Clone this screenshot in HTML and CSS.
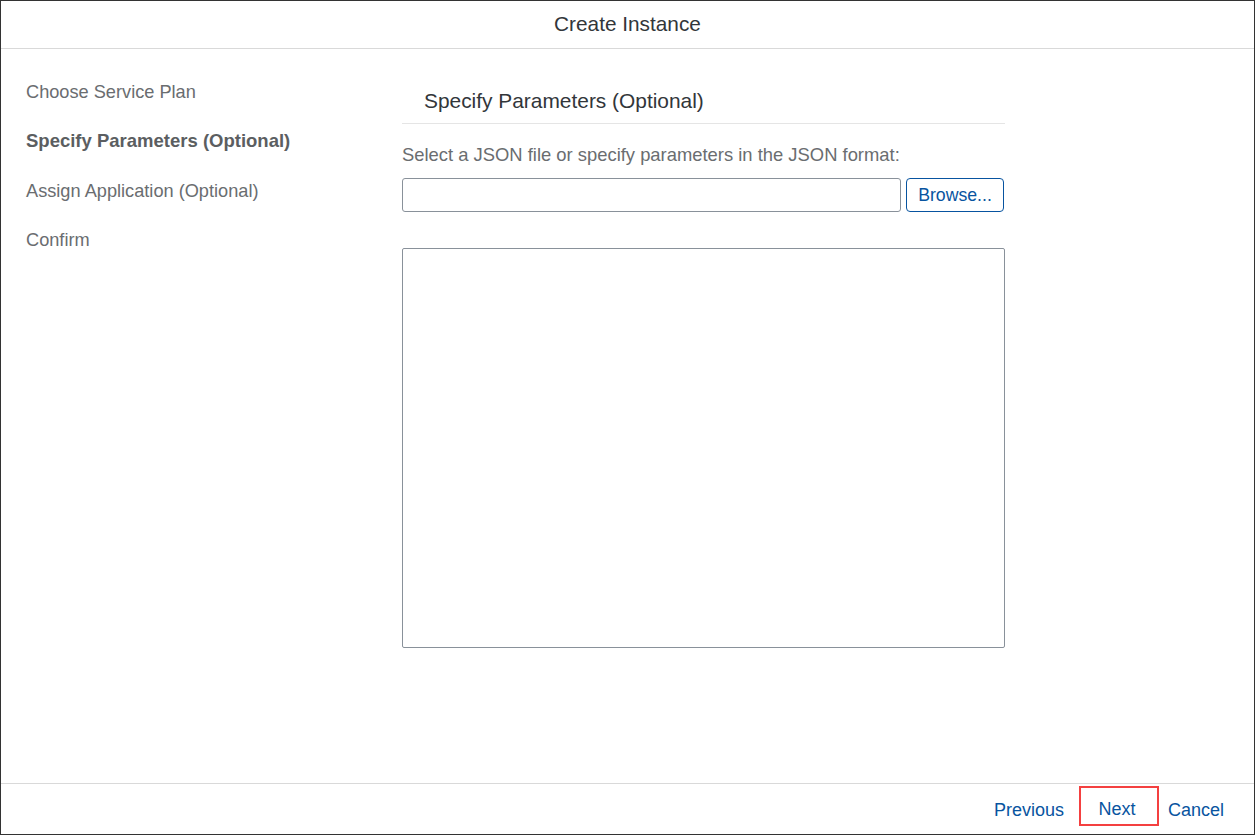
FILE: index.html
```html
<!DOCTYPE html>
<html>
<head>
<meta charset="utf-8">
<link rel="stylesheet" href="styles.css">
</head>
<body>
<div class="dialog">
  <header class="header">Create Instance</header>
  <div class="main">
    <nav class="steps">
      <div class="step">Choose Service Plan</div>
      <div class="step active">Specify Parameters (Optional)</div>
      <div class="step">Assign Application (Optional)</div>
      <div class="step">Confirm</div>
    </nav>
    <section class="content">
      <h2 class="title">Specify Parameters (Optional)</h2>
      <p class="label">Select a JSON file or specify parameters in the JSON format:</p>
      <div class="filerow">
        <div class="input"></div>
        <button class="browse">Browse...</button>
      </div>
      <div class="textarea"></div>
    </section>
  </div>
  <footer class="footer">
    <button class="link">Previous</button>
    <button class="link next">Next</button>
    <button class="link cancel">Cancel</button>
  </footer>
</div>
</body>
</html>
```
FILE: styles.css
```css
html, body {
  margin: 0;
  padding: 0;
  background: #fff;
}
body {
  font-family: "Liberation Sans", Arial, sans-serif;
  width: 1255px;
  height: 835px;
  overflow: hidden;
}
.dialog {
  box-sizing: border-box;
  width: 1255px;
  height: 835px;
  border: 1px solid #333;
  display: flex;
  flex-direction: column;
}
.header {
  box-sizing: border-box;
  height: 48px;
  border-bottom: 1px solid #d9d9d9;
  display: flex;
  align-items: center;
  justify-content: center;
  font-size: 20.8px;
  color: #32363a;
  padding-bottom: 2px;
}
.main {
  flex: 1;
  display: flex;
}
.steps {
  width: 401px;
  padding: 33px 0 0 25px;
  box-sizing: border-box;
}
.step {
  font-size: 18.2px;
  color: #6a6d70;
  height: 49.4px;
  line-height: 20px;
}
.step.active {
  font-weight: bold;
  color: #5b5e61;
  font-size: 18.5px;
}
.content {
  width: 603px;
  padding-top: 40px;
}
.title {
  margin: 0;
  font-weight: normal;
  font-size: 20.9px;
  color: #32363a;
  padding: 0 0 10px 22px;
  line-height: 24px;
  border-bottom: 1px solid #e5e5e5;
}
.label {
  margin: 0;
  padding-top: 20px;
  font-size: 18.4px;
  line-height: 22px;
  color: #6a6d70;
}
.filerow {
  display: flex;
  gap: 5px;
  margin-top: 12px;
}
.input {
  box-sizing: border-box;
  width: 499px;
  height: 34px;
  border: 1px solid #89919a;
  border-radius: 3px;
}
.browse {
  box-sizing: border-box;
  width: 98px;
  height: 34px;
  border: 1px solid #0854a0;
  border-radius: 4px;
  background: #fff;
  color: #0854a0;
  font-family: inherit;
  font-size: 17.7px;
  padding: 0;
}
.textarea {
  box-sizing: border-box;
  margin-top: 36px;
  height: 400px;
  border: 1px solid #89919a;
  border-radius: 2px;
}
.footer {
  box-sizing: border-box;
  height: 51px;
  border-top: 1px solid #d9d9d9;
  display: flex;
  justify-content: flex-end;
  align-items: center;
  padding-right: 30px;
  padding-top: 2px;
}
.link {
  background: none;
  border: none;
  font-family: inherit;
  font-size: 18px;
  color: #0854a0;
  padding: 0;
}
.next {
  box-sizing: border-box;
  width: 80px;
  height: 40px;
  border: 2px solid #f44040;
  margin-left: 15px;
  margin-right: 9px;
  margin-bottom: 8px;
  padding: 7px 4px 0 0;
}
```
